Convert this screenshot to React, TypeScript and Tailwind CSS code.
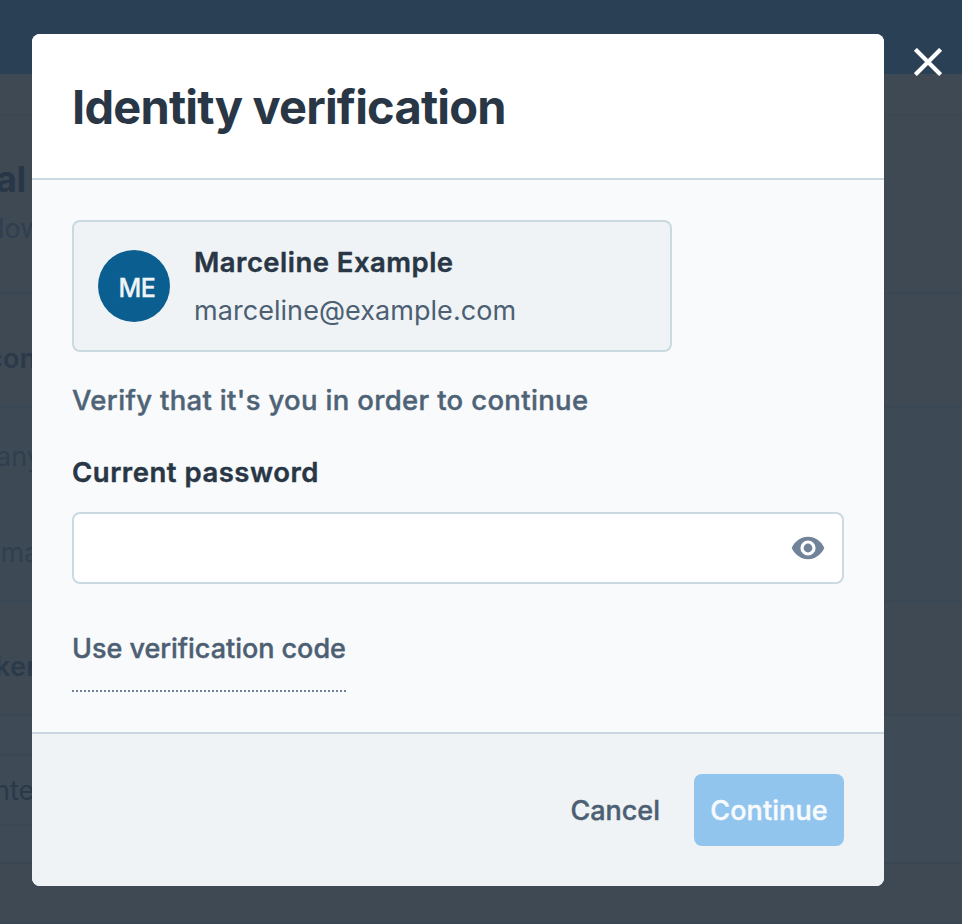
import { useState } from "react";

function PageBehind() {
  return (
    <div className="flex h-[924px] flex-col overflow-hidden bg-[#3e4954] whitespace-nowrap">
      <div className="h-[74px] shrink-0 bg-[#2a4054]" />
      <div className="h-[42px] shrink-0 border-b-2 border-[#3b4753] bg-[#3e4953]" />
      <div className="h-[178px] shrink-0 border-b-2 border-[#394653] pt-[41px]">
        <p className="-ml-1 text-[36px] leading-[44px] font-bold tracking-[-0.5px] text-[#283747]">al</p>
        <p className="mt-3 -ml-[2px] text-[27px] leading-8 text-[#2f3f4f]">low</p>
      </div>
      <div className="flex h-[114px] shrink-0 items-center border-b-2 border-[#394653] pt-[18px]">
        <p className="-ml-[13px] text-[27px] leading-10 font-semibold tracking-[0.3px] text-[#2b3a4a]">con</p>
      </div>
      <div className="h-[194px] shrink-0 border-b-2 border-[#394653] bg-[#3d4a55] pt-[29px]">
        <p className="-ml-[4px] text-[27px] leading-10 text-[#2f3f4f]">any</p>
        <p className="mt-14 -ml-[12px] text-[27px] leading-10 text-[#2f3f4f]">-ma</p>
      </div>
      <div className="flex h-[114px] shrink-0 items-center border-b-2 border-[#394653] pt-[18px]">
        <p className="-ml-[5px] text-[27px] leading-10 font-semibold tracking-[0.3px] text-[#2b3a4a]">ker</p>
      </div>
      <div className="h-[148px] shrink-0 border-b-2 border-[#394653] bg-[#3e4a55] pt-[38px]">
        <div className="flex h-[72px] w-[400px] items-center border-y-2 border-[#3a4855] pt-0.5">
          <p className="-ml-[6px] text-[27px] leading-10 text-[#293949]">nte</p>
        </div>
      </div>
      <div className="h-[60px] shrink-0 border-b-2 border-[#3a4652]" />
    </div>
  );
}

function CloseIcon() {
  return (
    <svg width="28" height="28" viewBox="0 0 28 28" fill="none" stroke="white" strokeWidth="4.2">
      <path d="M1.4 1.4 26.6 26.6M26.6 1.4 1.4 26.6" />
    </svg>
  );
}

function EyeIcon() {
  return (
    <svg width="34" height="24" viewBox="0 0 34 24">
      <path
        d="M.7 12C3.8 5.3 10 .8 17 .8S30.200 5.300 33.300 12C30.200 18.700 24 23.200 17 23.200S3.800 18.700.7 12Z"
        fill="#718399"
      />
      <circle cx="17" cy="12" r="6" fill="#718399" stroke="white" strokeWidth="3.200" />
    </svg>
  );
}

export default function App() {
  const [password, setPassword] = useState("");
  const [visible, setVisible] = useState(false);

  return (
    <div className="relative h-[924px] w-[962px] overflow-hidden font-['Inter',sans-serif]">
      <PageBehind />
      <div className="absolute inset-0 flex items-start pt-[34px] pl-8">
        <section className="flex h-[852px] w-[852px] flex-col overflow-hidden rounded-lg bg-[#f9fafc]">
          <header className="flex h-[146px] shrink-0 items-center border-b-2 border-[#cbd9e0] bg-white px-10 pt-px">
            <h1 className="text-[47px] leading-[60px] font-bold tracking-[-0.8px] text-[#283645]">
              Identity verification
            </h1>
          </header>

          <main className="flex flex-1 flex-col items-start px-10 pt-10 text-[27px] leading-[42px]">
            <div className="flex h-[132px] w-[600px] shrink-0 items-center gap-6 rounded-lg border-2 border-[#cbd9e0] bg-[#f0f3f6] px-6">
              <div className="flex size-[72px] items-center justify-center rounded-full bg-[#0b5f90] pt-1 pl-1.5 text-[25px] leading-10 font-medium tracking-[-0.5px] text-[#eef4f8] [-webkit-text-stroke:0.3px]">
                ME
              </div>
              <div className="flex flex-col gap-2 pt-0.5">
                <p className="text-[27.5px] leading-10 font-semibold tracking-[0.47px] text-[#283645] [-webkit-text-stroke:0.4px]">
                  Marceline Example
                </p>
                <p className="tracking-[0.05px] text-[#4c5f73]">marceline@example.com</p>
              </div>
            </div>
            <p className="mt-7 text-[27.5px] leading-10 font-medium tracking-[0.33px] text-[#4f6376] [-webkit-text-stroke:0.4px]">
              Verify that it's you in order to continue
            </p>
            <label
              htmlFor="password"
              className="mt-8 text-[27.5px] leading-10 font-semibold tracking-[0.52px] text-[#283645] [-webkit-text-stroke:0.4px]"
            >
              Current password
            </label>
            <div className="mt-5 flex h-[72px] w-full items-center rounded-lg border-2 border-[#cbd9e0] bg-white pr-[17px] pl-4">
              <input
                id="password"
                type={visible ? "text" : "password"}
                value={password}
                onChange={(e) => setPassword(e.target.value)}
                className="min-w-0 flex-1 bg-transparent outline-none"
              />
              <button type="button" aria-label="Show password" onClick={() => setVisible(!visible)}>
                <EyeIcon />
              </button>
            </div>
            <button
              type="button"
              className="mt-[44px] h-[64px] w-[274px] border-b-2 border-dotted border-[#718096] pb-5 text-left font-medium tracking-[-0.03px] whitespace-nowrap text-[#4c5f73] [-webkit-text-stroke:0.4px]"
            >
              Use verification code
            </button>
          </main>

          <footer className="flex h-[154px] shrink-0 items-center justify-end gap-[34px] border-t-2 border-[#cbd6e0] bg-[#f0f3f6] px-10 text-[27px] leading-10 font-medium [-webkit-text-stroke:0.4px]">
            <button type="button" className="pt-0.5 text-[#4c5f73]">
              Cancel
            </button>
            <button type="button" className="h-[72px] w-[150px] rounded-lg bg-[#92c5ed] pt-0.5 tracking-[0.1px] text-[#f8fbfe]">
              Continue
            </button>
          </footer>
        </section>
        <button type="button" aria-label="Close" className="mt-[14px] ml-[30px]">
          <CloseIcon />
        </button>
      </div>
    </div>
  );
}
